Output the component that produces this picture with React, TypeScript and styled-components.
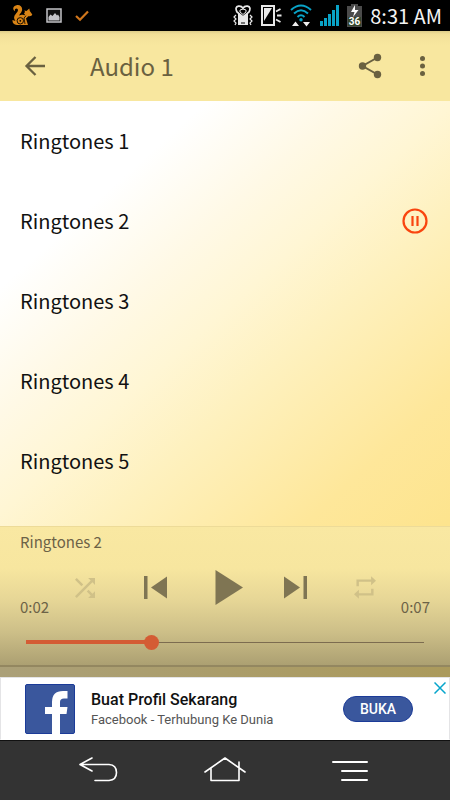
import React, { useState } from "react";
import styled, { createGlobalStyle } from "styled-components";

const Global = createGlobalStyle`
  * { box-sizing: border-box; }
  body { margin: 0; background: #333; }
  button { border: 0; padding: 0; background: none; color: inherit; font: inherit; cursor: pointer; }
  svg { display: block; }
`;

const Screen = styled.div`
  min-height: 100vh;
  display: flex;
  flex-direction: column;
  font-family: "Noto Sans CJK SC", "Liberation Sans", sans-serif;
`;

const StatusBar = styled.div`
  height: 31px;
  flex: none;
  display: flex;
  align-items: center;
  justify-content: space-between;
  padding: 0 8px 0 12px;
  background: #000;
  color: #f4f4f4;
`;

const StatusIcons = styled.div<{ $gap: number }>`
  display: flex;
  align-items: center;
  gap: ${(p) => p.$gap}px;
`;

const Clock = styled.span`
  font-size: 20px;
  line-height: 28px;
  white-space: nowrap;
`;

const Toolbar = styled.header`
  height: 70px;
  flex: none;
  display: flex;
  align-items: center;
  padding: 0 10px 0 20px;
  color: #6a6140;
  background: linear-gradient(#dccb88 0, #f0de97 3px, #f5e39c 8px, #f8e79f 14px);
`;

const IconButton = styled.button`
  flex: none;
  display: grid;
  place-items: center;
`;

const Title = styled.h1`
  flex: 1;
  margin: 0 0 0 40px;
  font-size: 24px;
  line-height: 40px;
  font-weight: 400;
`;

const Actions = styled.div`
  display: flex;
  align-items: center;
  gap: 20px;
`;

const Content = styled.main`
  flex: 1;
  display: flex;
  flex-direction: column;
  background: linear-gradient(138deg, #fff 0%, #fff 19%, #fff9e6 32%, #fff6d4 42%, #fef1bf 52%, #fee79a 71%, #fde48e 84%, #fbe08a 100%);
`;

const Tracks = styled.ul`
  flex: 1;
  margin: 0;
  padding: 0;
  list-style: none;
`;

const Track = styled.li`
  height: 80px;
  display: flex;
  align-items: center;
  justify-content: space-between;
  padding: 0 20px;
  color: #111;
  font-size: 20px;
  line-height: 32px;
`;

const Player = styled.section`
  flex: none;
  height: 141px;
  padding: 3px 20px 0;
  border-top: 1px solid #eddb98;
  border-bottom: 2px solid #938760;
  color: #6c6247;
  background: linear-gradient(#f9e8a2 0%, #f7e69f 30%, #e6d696 53%, #cdbf88 76%, #aca072 100%);
`;

const NowPlaying = styled.div`
  font-size: 15px;
  line-height: 24px;
`;

const Transport = styled.div`
  height: 67px;
  display: grid;
  grid-template-columns: 30px 1fr 30px;
`;

const Time = styled.span<{ $end?: boolean }>`
  align-self: end;
  justify-self: ${(p) => (p.$end ? "end" : "start")};
  font-size: 15px;
  line-height: 28px;
`;

const Controls = styled.div`
  display: flex;
  align-items: center;
  justify-content: center;
  gap: 30px;
`;

const ControlButton = styled(IconButton)<{ $faded?: boolean }>`
  width: 40px;
  height: 48px;
  color: ${(p) => (p.$faded ? "#d0c188" : "#7f7553")};
`;

const Seek = styled.input`
  display: block;
  width: calc(100% + 2px);
  height: 16px;
  margin: 13px -1px 0;
  appearance: none;
  outline: none;
  background-color: transparent;
  background-image: linear-gradient(#d45c34, #d45c34), linear-gradient(#7c6c50, #7c6c50);
  background-repeat: no-repeat;
  background-position: 7px center, 7px center;
  background-size: 31% 4px, calc(100% - 14px) 1px;

  &::-webkit-slider-thumb {
    appearance: none;
    width: 15px;
    height: 15px;
    border-radius: 50%;
    background: #d45c34;
  }
`;

const Strip = styled.div`
  flex: none;
  height: 10px;
  background: linear-gradient(90deg, #aba078, #ab9a5c);
`;

const Ad = styled.aside`
  flex: none;
  height: 63px;
  display: flex;
  align-items: center;
  padding: 0 3px 0 24px;
  border: 1px solid #e4e4e6;
  border-bottom-color: #fff;
  background: #fff;
  font-family: Roboto, sans-serif;
`;

const AdText = styled.div`
  flex: 1;
  padding-left: 16px;
`;

const AdTitle = styled.div`
  font-size: 16px;
  line-height: 22px;
  font-weight: 500;
  color: #111;
`;

const AdLine = styled.div`
  font-size: 13px;
  line-height: 18px;
  color: #555;
`;

const AdButton = styled.button`
  && {
    width: 70px;
    height: 26px;
    flex: none;
    border: 1px solid #1b3b98;
    border-radius: 13px;
    background: #3a579d;
    color: #fff;
    font-size: 14px;
    line-height: 24px;
    font-weight: 500;
  }
`;

const AdClose = styled(IconButton)`
  align-self: flex-start;
  margin: 4px 0 0 21px;
`;

const NavBar = styled.nav`
  flex: none;
  height: 60px;
  display: flex;
  align-items: center;
  justify-content: center;
  gap: 83px;
  border-top: 1px solid #111;
  background: #333;
  color: #fff;
`;

const names = [1, 2, 3, 4, 5].map((n) => `Ringtones ${n}`);

const Squirrel = () => (
  <svg width="21" height="21" viewBox="0 0 21 21" fill="#d98416">
    <path d="M4.500 .2C8 -.6 10.800 2 10 5.500 9.300 8.300 7 9 7.300 10.800 9 9.300 12 9.500 13.500 10.500L12 8.500 13 7 12.300 5.500 14.500 6 17.300 3.500 17.800 6 20.300 9.500C19.800 11.200 17.800 11.200 16.300 11.300L14 13.500 15.500 18.500 16 20H5C1.500 19.800 .3 17.500 .5 15L3.500 16C0 11.500 4 9 5.300 7 6.500 5 6 3.600 4.500 3.400 3 3.400 2.500 4.800 3 6.300 .3 5 .6 1 4.500 .2Z" />
    <circle cx="8.300" cy="15.800" r="3.200" fill="none" stroke="#000" strokeWidth=".9" />
    <circle cx="8.300" cy="15.800" r=".9" fill="#000" />
    <path d="M14 10.800 12 13 13 19" stroke="#000" strokeWidth=".8" fill="none" />
  </svg>
);

const Gallery = () => (
  <svg width="16" height="15" viewBox="0 0 16 15">
    <rect x="1" y="1" width="14" height="13" fill="#111" stroke="#c4c4c8" strokeWidth="1.500" />
    <path d="M2.500 12.500V9L4.500 6.500 6.500 8 9 5 11 7.500 12 6.500 13.500 9V12.500Z" fill="#c4c4c8" />
  </svg>
);

const Tick = () => (
  <svg width="14" height="12" viewBox="0 0 14 12" fill="none" stroke="#d0761c" strokeWidth="2.200">
    <path d="M1 6 5 9.800 13 1.500" />
  </svg>
);

const Face = () => (
  <svg width="20" height="21" viewBox="0 0 20 21" fill="none" stroke="#e8e8e8">
    <path d="M5 8H15V20H5Z" fill="#e8e8e8" stroke="none" />
    <path d="M10 12 4 7Q1.500 2 5.500 1.200 8.500 .8 10 3.200 11.500 .8 14.500 1.200 18.500 2 16 7Z" fill="#000" strokeWidth="1.700" />
    <path d="M7 5Q10 3 13 5V7L10 9.500 7 7Z" strokeWidth="1" />
    <path d="M8 18H12" stroke="#000" strokeWidth="1" />
    <path d="M3 10 1 12 3 14 1 16 3 18 2 20M17 10 19 12 17 14 19 16 17 18 18 20" strokeWidth="1.200" />
  </svg>
);

const Flip = () => (
  <svg width="21" height="21" viewBox="0 0 21 21" fill="none" stroke="#e8e8e8">
    <rect x="1" y="1" width="12" height="19" strokeWidth="2" />
    <path d="M3 3H11L3 16Z" fill="#e8e8e8" stroke="none" />
    <path d="M15 6.500 19.500 4M16 10.500H20.500M15 14.500 19.500 17" strokeWidth="1.800" />
  </svg>
);

const Wifi = () => (
  <svg width="22" height="23" viewBox="0 0 22 23" fill="none" stroke="#09a3c7" strokeWidth="2">
    <path d="M1 6Q11-3 21 6M4 9.500Q11 3 18 9.500M7.500 13Q11 9.500 14.500 13" />
    <circle cx="11" cy="15.800" r="1.700" fill="#09a3c7" stroke="none" />
    <path d="M2 22H9L5.500 17.500ZM13 18H20L16.500 22.500Z" fill="#eee" stroke="none" />
  </svg>
);

const Signal = () => (
  <svg width="19" height="21" viewBox="0 0 19 21" fill="#09a3c7">
    <path d="M0 16H3V21H0ZM4 13H7V21H4ZM8 9H11V21H8ZM12 5H15V21H12ZM16 0H19V21H16Z" />
  </svg>
);

const Battery = () => (
  <svg width="15" height="23" viewBox="0 0 15 23">
    <path d="M4 0H11V2H15V23H0V2H4Z" fill="#4b4b4b" />
    <path d="M1 13H14V22H1Z" fill="#32432a" />
    <path d="M8 1 4 8H7.500L6 13 11.500 6H8Z" fill="#fff" />
    <text x="7.500" y="21" textAnchor="middle" fill="#fff" fontFamily="Roboto, sans-serif" fontWeight="700" fontSize="10">36</text>
  </svg>
);

const BackArrow = () => (
  <svg width="30" height="30" viewBox="0 0 30 30" fill="none" stroke="currentColor" strokeWidth="2.300">
    <path d="M25 15H7M15.500 6 6.500 15 15.500 24" />
  </svg>
);

const Share = () => (
  <svg width="30" height="30" viewBox="0 0 30 30" fill="currentColor">
    <path d="M22.500 6.500 7.500 15 22.500 23.500" fill="none" stroke="currentColor" strokeWidth="2" />
    <circle cx="22.500" cy="6.500" r="3.700" /><circle cx="7.500" cy="15" r="3.700" /><circle cx="22.500" cy="23.500" r="3.700" />
  </svg>
);

const Dots = () => (
  <svg width="35" height="30" viewBox="0 0 35 30" fill="currentColor">
    <circle cx="17.500" cy="7.500" r="2.500" /><circle cx="17.500" cy="15" r="2.500" /><circle cx="17.500" cy="22.500" r="2.500" />
  </svg>
);

const PauseMark = () => (
  <svg width="30" height="30" viewBox="0 0 30 30" fill="none" stroke="#f9450f">
    <circle cx="15" cy="15" r="11.500" strokeWidth="2.200" />
    <path d="M12.500 10V20M17.500 10V20" strokeWidth="2.200" />
  </svg>
);

const Shuffle = () => (
  <svg width="20" height="20" viewBox="4 4 16 16" fill="currentColor">
    <path d="M10.590 9.170 5.410 4 4 5.410l5.170 5.170zM14.500 4l2.040 2.040L4 18.590 5.410 20 17.960 7.460 20 9.500V4zm.33 9.410-1.410 1.410 3.130 3.130L14.500 20H20v-5.500l-2.040 2.040z" />
  </svg>
);

const Skip = ({ back = false }: { back?: boolean }) => (
  <svg width="23" height="23" viewBox="0 0 23 23" fill="currentColor">
    <path d={back ? "M0 0H3.500V23H0ZM23 .5V22.500L7 11.500Z" : "M19.500 0H23V23H19.500ZM0 .5V22.500L16 11.500Z"} />
  </svg>
);

const PlayMark = () => (
  <svg width="35" height="35" viewBox="0 0 35 35" fill="currentColor">
    <path d="M7.500 0 35 17.500 7.500 35Z" />
  </svg>
);

const Repeat = () => (
  <svg width="22" height="25" viewBox="3 1 18 22" preserveAspectRatio="none" fill="currentColor">
    <path d="M7 7h10v3l4-4-4-4v3H5v6h2zm10 10H7v-3l-4 4 4 4v-3h12v-6h-2z" />
  </svg>
);

const Facebook = () => (
  <svg width="50" height="50" viewBox="0 0 50 50">
    <rect x=".5" y=".5" width="49" height="49" rx="1.500" fill="#3a579d" stroke="#1b3b98" />
    <path d="M27 50V30H20V23H27V18Q27 7 38 7H42.500V14.500H39Q35 14.500 35 18V23H42.500L41.500 30H35V50Z" fill="#fff" />
  </svg>
);

const Cross = () => (
  <svg width="12" height="12" viewBox="0 0 12 12" stroke="#06a5cc" strokeWidth="1.500">
    <path d="M.5.500 11.500 11.500M11.500.500.5 11.500" />
  </svg>
);

const NavBack = () => (
  <svg width="42" height="28" viewBox="0 0 42 28" fill="none" stroke="currentColor" strokeWidth="1.600" strokeLinecap="round" strokeLinejoin="round">
    <path d="M13 1 1 7.500 13 14M1 7.500H30Q37.500 8 37.500 15.500T30 23.500H16" />
  </svg>
);

const NavHome = () => (
  <svg width="42" height="28" viewBox="0 0 42 28" fill="none" stroke="currentColor" strokeWidth="1.600" strokeLinecap="round" strokeLinejoin="round">
    <path d="M1 15 21 1 41 15M7 11V23.500H35V5" />
  </svg>
);

const NavMenu = () => (
  <svg width="42" height="28" viewBox="0 0 42 28" fill="none" stroke="currentColor" strokeWidth="2" strokeLinecap="round">
    <path d="M4 5H38M13 14H38M13 23H38" />
  </svg>
);

export default function App() {
  const [position, setPosition] = useState(315);
  return (
    <Screen>
      <Global />
      <StatusBar>
        <StatusIcons $gap={13}><Squirrel /><Gallery /><Tick /></StatusIcons>
        <StatusIcons $gap={8}>
          <Face /><Flip /><Wifi /><Signal /><Battery /><Clock>8:31 AM</Clock>
        </StatusIcons>
      </StatusBar>
      <Toolbar>
        <IconButton aria-label="Back"><BackArrow /></IconButton>
        <Title>Audio 1</Title>
        <Actions>
          <IconButton aria-label="Share"><Share /></IconButton>
          <IconButton aria-label="More options"><Dots /></IconButton>
        </Actions>
      </Toolbar>
      <Content>
        <Tracks>
          {names.map((name, i) => (
            <Track key={name}>
              <span>{name}</span>
              {i === 1 && <IconButton aria-label="Pause"><PauseMark /></IconButton>}
            </Track>
          ))}
        </Tracks>
        <Player>
          <NowPlaying>Ringtones 2</NowPlaying>
          <Transport>
            <Time>0:02</Time>
            <Controls>
              <ControlButton $faded aria-label="Shuffle"><Shuffle /></ControlButton>
              <ControlButton aria-label="Previous"><Skip back /></ControlButton>
              <ControlButton aria-label="Play"><PlayMark /></ControlButton>
              <ControlButton aria-label="Next"><Skip /></ControlButton>
              <ControlButton $faded aria-label="Repeat"><Repeat /></ControlButton>
            </Controls>
            <Time $end>0:07</Time>
          </Transport>
          <Seek
            type="range"
            min={0}
            max={1000}
            value={position}
            aria-label="Position"
            onChange={(e) => setPosition(Number(e.target.value))}
            style={{ backgroundSize: `${position / 10}% 4px, calc(100% - 14px) 1px` }}
          />
        </Player>
        <Strip />
      </Content>
      <Ad>
        <Facebook />
        <AdText>
          <AdTitle>Buat Profil Sekarang</AdTitle>
          <AdLine>Facebook - Terhubung Ke Dunia</AdLine>
        </AdText>
        <AdButton>BUKA</AdButton>
        <AdClose aria-label="Close ad"><Cross /></AdClose>
      </Ad>
      <NavBar>
        <IconButton aria-label="System back"><NavBack /></IconButton>
        <IconButton aria-label="Home"><NavHome /></IconButton>
        <IconButton aria-label="Menu"><NavMenu /></IconButton>
      </NavBar>
    </Screen>
  );
}
